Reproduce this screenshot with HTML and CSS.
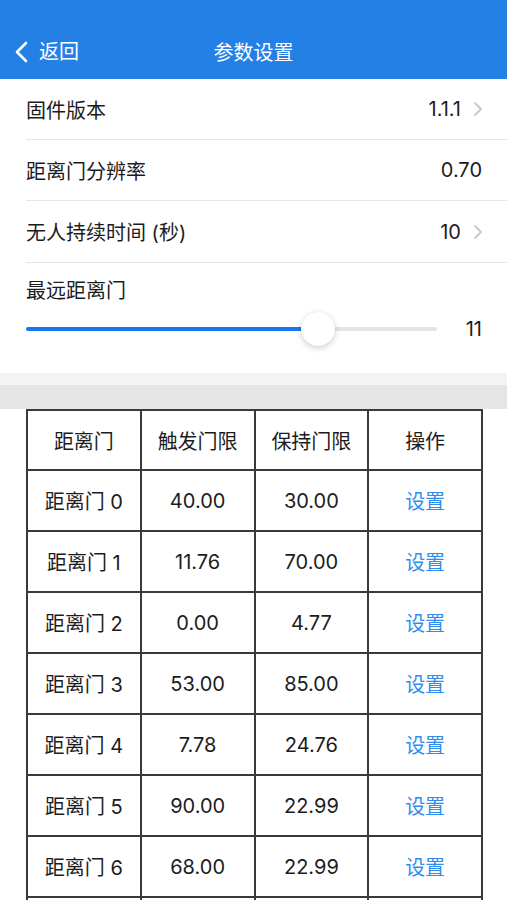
FILE: index.html
```html
<!DOCTYPE html>
<html lang="zh-CN">
<head>
  <meta charset="UTF-8">
  <meta name="viewport" content="width=device-width, initial-scale=1.0">
  <title>参数设置</title>
  <link rel="stylesheet" href="styles.css">
</head>
<body>

  <div class="navbar">
    <div class="back">
      <svg width="16" height="22" viewBox="0 0 16 22"><path d="M12 2 L3 11 L12 20" fill="none" stroke="#fff" stroke-width="2.6" stroke-linecap="round" stroke-linejoin="round"/></svg>
      <span>返回</span>
    </div>
    <div class="title">参数设置</div>
  </div>

  <div class="settings">
    <div class="row">
      <span class="label">固件版本</span>
      <span class="value">1.1.1<svg class="arrow" width="10" height="16" viewBox="0 0 10 16"><path d="M2 2 L8 8 L2 14" fill="none" stroke="#c7c7cc" stroke-width="1.8" stroke-linecap="round" stroke-linejoin="round"/></svg></span>
    </div>
    <div class="row">
      <span class="label">距离门分辨率</span>
      <span class="value">0.70</span>
    </div>
    <div class="row">
      <span class="label">无人持续时间 (秒)</span>
      <span class="value">10<svg class="arrow" width="10" height="16" viewBox="0 0 10 16"><path d="M2 2 L8 8 L2 14" fill="none" stroke="#c7c7cc" stroke-width="1.8" stroke-linecap="round" stroke-linejoin="round"/></svg></span>
    </div>
    <div class="slider-row">
      <div class="label">最远距离门</div>
      <div class="slider-line">
        <div class="track">
          <div class="fill" style="width: 71%;"></div>
          <div class="thumb" style="left: 71%;"></div>
        </div>
        <span class="slider-value">11</span>
      </div>
    </div>
  </div>

  <div class="divider"></div>

  <table class="gates">
    <tr><th>距离门</th><th>触发门限</th><th>保持门限</th><th>操作</th></tr>
    <tr><td>距离门 0</td><td>40.00</td><td>30.00</td><td class="op">设置</td></tr>
    <tr><td>距离门 1</td><td>11.76</td><td>70.00</td><td class="op">设置</td></tr>
    <tr><td>距离门 2</td><td>0.00</td><td>4.77</td><td class="op">设置</td></tr>
    <tr><td>距离门 3</td><td>53.00</td><td>85.00</td><td class="op">设置</td></tr>
    <tr><td>距离门 4</td><td>7.78</td><td>24.76</td><td class="op">设置</td></tr>
    <tr><td>距离门 5</td><td>90.00</td><td>22.99</td><td class="op">设置</td></tr>
    <tr><td>距离门 6</td><td>68.00</td><td>22.99</td><td class="op">设置</td></tr>
    <tr><td></td><td></td><td></td><td></td></tr>
  </table>

</body>
</html>
```

FILE: styles.css
```css
body {
  margin: 0;
  font-family: "Inter", "Noto Sans CJK SC", sans-serif;
  background-color: #fff;
  color: #1c1c1e;
  overflow: hidden;
}

.navbar {
  height: 79px;
  background-color: #2580e6;
  color: #fff;
  position: relative;
  display: flex;
  align-items: flex-end;
  justify-content: center;
  box-sizing: border-box;
  padding-bottom: 12px;
}

.title {
  font-size: 20px;
  line-height: 28px;
}

.back {
  position: absolute;
  left: 14px;
  bottom: 15px;
  display: flex;
  align-items: center;
  gap: 9px;
  font-size: 20px;
  line-height: 24px;
}

.settings {
  padding-left: 26px;
}

.row {
  height: 60px;
  display: flex;
  align-items: center;
  justify-content: space-between;
  padding-right: 25px;
  border-bottom: 1px solid #e6e6e8;
  font-size: 20px;
}

.row:nth-child(3) {
  height: 61px;
}

.value {
  display: flex;
  align-items: center;
}

.arrow {
  margin-left: 12px;
  margin-right: -1px;
}

.slider-row {
  height: 110px;
  box-sizing: border-box;
  padding: 12px 25px 0 0;
  font-size: 20px;
}

.slider-line {
  display: flex;
  align-items: center;
  margin-top: 7px;
  height: 36px;
}

.track {
  position: relative;
  width: 411px;
  height: 4px;
  border-radius: 2px;
  background-color: #e4e4e4;
}

.fill {
  height: 100%;
  border-radius: 2px;
  background-color: #1877f2;
}

.thumb {
  position: absolute;
  top: -15px;
  width: 34px;
  height: 34px;
  margin-left: -17px;
  border-radius: 50%;
  background-color: #fff;
  box-shadow: 0 2px 6px rgba(0, 0, 0, 0.18), 0 0 1px rgba(0, 0, 0, 0.1);
}

.slider-value {
  margin-left: auto;
}

.divider {
  height: 36px;
  background: linear-gradient(#f3f3f5 0, #f3f3f5 12px, #e5e5e5 12px);
}

.gates {
  margin: 0 0 0 26px;
  width: 457px;
  border-collapse: collapse;
  table-layout: fixed;
  font-size: 20px;
}

.gates th,
.gates td {
  border: 2px solid #3a3a3a;
  height: 59px;
  padding: 0;
  text-align: center;
  font-weight: normal;
}

.gates th {
  height: 58px;
}

.gates .op {
  color: #2f8df0;
}
```
